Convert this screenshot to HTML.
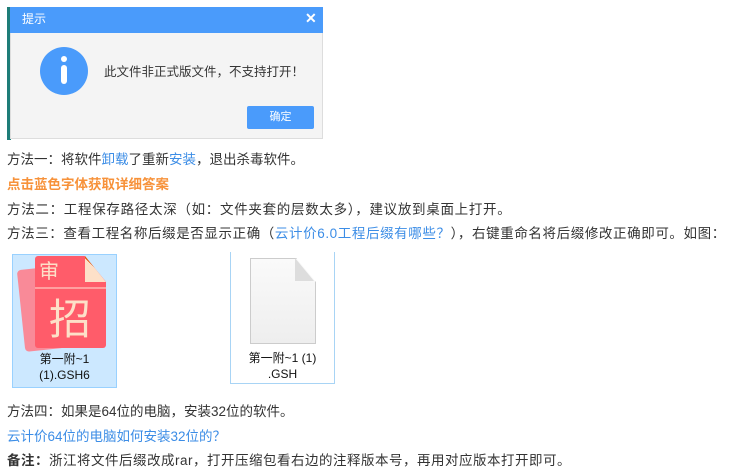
<!DOCTYPE html>
<html><head><meta charset="utf-8"><style>
body{margin:0;width:739px;height:474px;background:#fff;position:relative;overflow:hidden;font-family:"Liberation Sans","Noto Sans CJK SC",sans-serif;font-size:13.5px;color:#333}
.a{position:absolute;white-space:nowrap;line-height:16px}
.b{color:#3c8de6}
</style></head><body>
<div style="position:absolute;left:7px;top:7px;width:4px;height:133px;background:#1e7d78"></div>
<div style="position:absolute;left:10px;top:7px;width:313px;height:132px;background:#f4f4f4;border:1px solid #ddd;border-top:none;box-sizing:border-box"></div>
<div style="position:absolute;left:10px;top:7px;width:313px;height:26px;background:#4a9bfb"></div>
<div class="a" style="left:22px;top:11px;color:#fff;font-size:12px">提示</div>
<div class="a" style="left:305px;top:10px;color:#fff;font-size:14px;font-weight:bold">✕</div>
<div style="position:absolute;left:40px;top:47px;width:48px;height:48px;border-radius:50%;background:#4a9bfb"></div>
<div style="position:absolute;left:61px;top:56px;width:6px;height:6px;border-radius:50%;background:#fff"></div>
<div style="position:absolute;left:61px;top:65px;width:6px;height:19px;border-radius:3px;background:#fff"></div>
<div class="a" style="left:104px;top:64px;font-size:12.5px">此文件非正式版文件，不支持打开！</div>
<div style="position:absolute;left:247px;top:106px;width:67px;height:23px;background:#4a9bfb;border-radius:2px;color:#fff;font-size:11px;text-align:center;line-height:23px">确定</div>

<div class="a" style="left:7px;top:152px">方法一：将软件<span class="b">卸载</span>了重新<span class="b">安装</span>，退出杀毒软件。</div>
<div class="a" style="left:7px;top:177px;color:#f7923a;font-weight:bold">点击蓝色字体获取详细答案</div>
<div class="a" style="left:7px;top:202px;letter-spacing:0.7px">方法二：工程保存路径太深（如：文件夹套的层数太多），建议放到桌面上打开。</div>
<div class="a" style="left:7px;top:226px;letter-spacing:0.6px">方法三：查看工程名称后缀是否显示正确（<span class="b">云计价6.0工程后缀有哪些？</span>），右键重命名将后缀修改正确即可。如图：</div>

<div style="position:absolute;left:12px;top:254px;width:105px;height:134px;background:#cce8ff;border:1px solid #99d1ff;box-sizing:border-box"></div>
<div style="position:absolute;left:21px;top:268px;width:40px;height:82px;background:#f98a98;border-radius:4px;transform:rotate(-6deg)"></div>
<div style="position:absolute;left:35px;top:256px;width:71px;height:92px;background:#ff5c6a;border-radius:3px;clip-path:polygon(0 0,70% 0,100% 28%,100% 100%,0 100%)"></div>
<div style="position:absolute;left:85px;top:256px;width:21px;height:26px;background:linear-gradient(45deg,#fde0c8 50%,#e0580f 50%);clip-path:polygon(0 0,100% 100%,0 100%)"></div>
<div style="position:absolute;left:35px;top:287px;width:71px;height:2px;background:#ffa0a0"></div>
<div class="a" style="left:39px;top:260px;color:#fde0c8;font-size:20px;line-height:24px">审</div>
<div class="a" style="left:49px;top:297px;color:#fde0c8;font-size:42px;line-height:46px">招</div>
<div class="a" style="left:12px;top:351px;width:105px;text-align:center;font-size:12px;line-height:16px;color:#111">第一附~1<br>(1).GSH6</div>

<div style="position:absolute;left:230px;top:252px;width:105px;height:132px;border:1px solid #a8d4f5;border-top:none;box-sizing:border-box"></div>
<div style="position:absolute;left:250px;top:258px;width:64px;height:84px;background:linear-gradient(#fafafa,#eee);border:1px solid #ccc;clip-path:polygon(0 0,70% 0,100% 28%,100% 100%,0 100%)"></div>
<div style="position:absolute;left:295px;top:258px;width:19px;height:23px;background:#ddd;clip-path:polygon(0 0,100% 100%,0 100%)"></div>
<div class="a" style="left:230px;top:350px;width:105px;text-align:center;font-size:12px;line-height:16px;color:#111">第一附~1 (1)<br>.GSH</div>

<div class="a" style="left:7px;top:404px">方法四：如果是64位的电脑，安装32位的软件。</div>
<div class="a b" style="left:7px;top:429px">云计价64位的电脑如何安装32位的？</div>
<div class="a" style="left:7px;top:453px;letter-spacing:0.5px"><b>备注：</b>浙江将文件后缀改成rar，打开压缩包看右边的注释版本号，再用对应版本打开即可。</div>
</body></html>
